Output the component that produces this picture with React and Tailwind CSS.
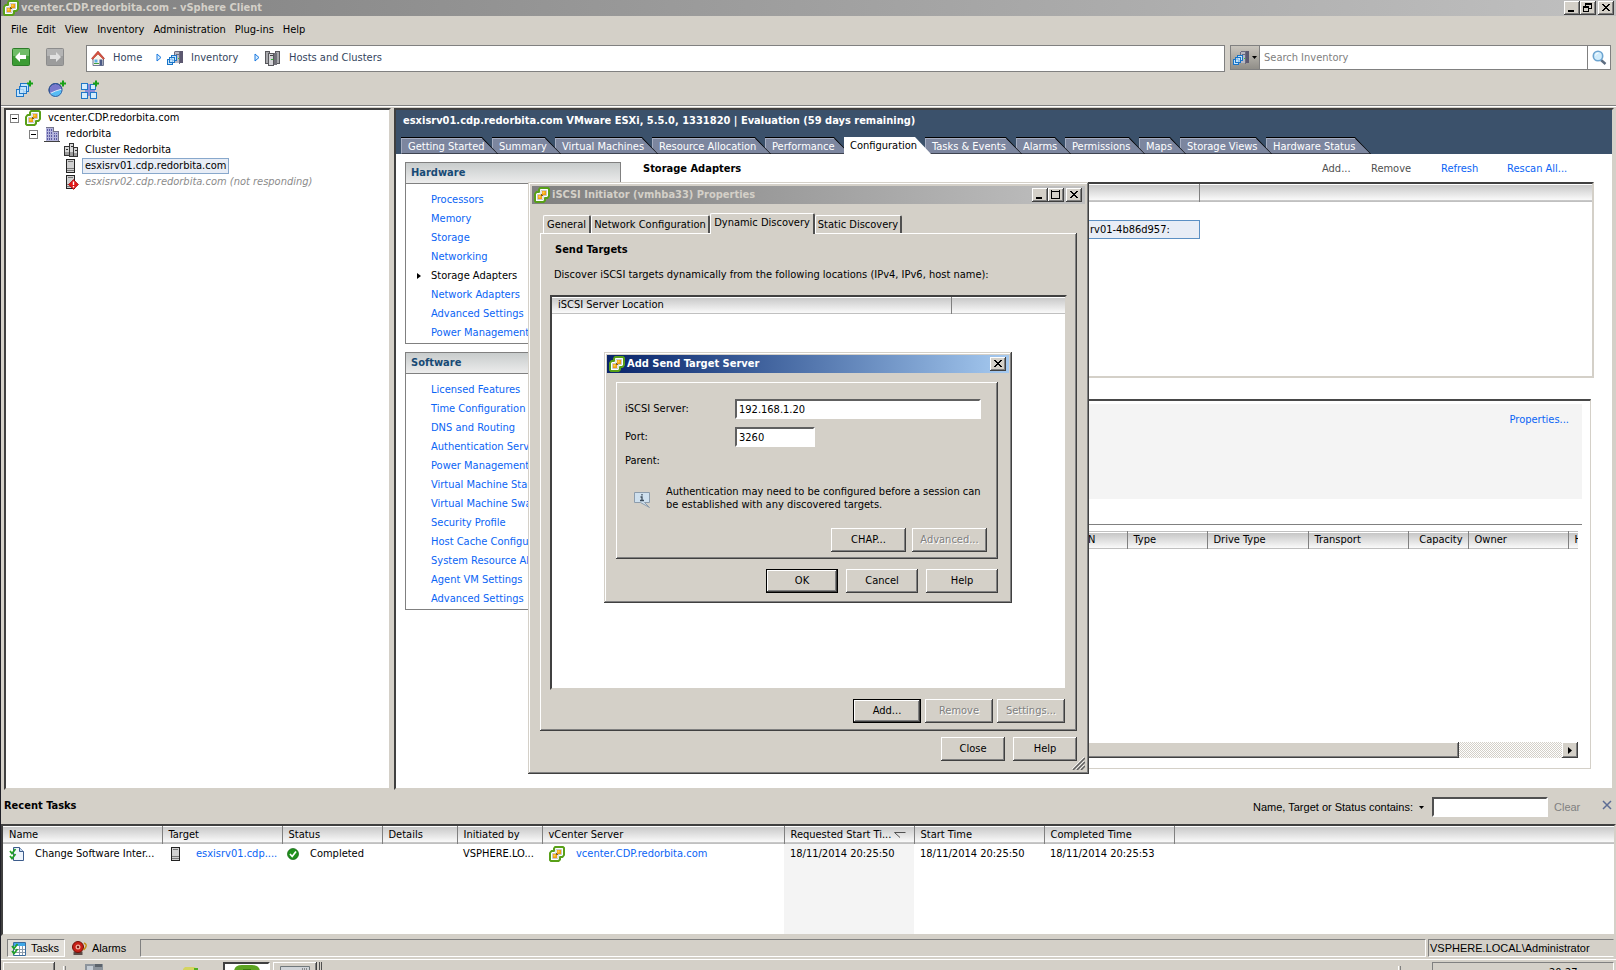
import React, { useState } from "react";

const MENU = ["File", "Edit", "View", "Inventory", "Administration", "Plug-ins", "Help"];

const HOST_TABS = [
  { label: "Getting Started", w: "w-[97px]" },
  { label: "Summary", w: "w-[69px]" },
  { label: "Virtual Machines", w: "w-[103px]" },
  { label: "Resource Allocation", w: "w-[119px]" },
  { label: "Performance", w: "w-[85px]" },
  { label: "Configuration", w: "w-[87px]" },
  { label: "Tasks & Events", w: "w-[97px]" },
  { label: "Alarms", w: "w-[55px]" },
  { label: "Permissions", w: "w-[80px]" },
  { label: "Maps", w: "w-[47px]" },
  { label: "Storage Views", w: "w-[92px]" },
  { label: "Hardware Status", w: "w-[105px]" },
];

const HARDWARE = [
  "Processors", "Memory", "Storage", "Networking", "Storage Adapters",
  "Network Adapters", "Advanced Settings", "Power Management",
];

const SOFTWARE = [
  "Licensed Features", "Time Configuration", "DNS and Routing", "Authentication Services",
  "Power Management", "Virtual Machine Startup", "Virtual Machine Swapfile", "Security Profile",
  "Host Cache Configuration", "System Resource Allocation", "Agent VM Settings", "Advanced Settings",
];

const DIALOG_TABS = [
  { label: "General", w: "w-[48px]" },
  { label: "Network Configuration", w: "w-[119px]" },
  { label: "Dynamic Discovery", w: "w-[105px]" },
  { label: "Static Discovery", w: "w-[87px]" },
];

const PATHS_COLS = [
  { label: "Type", w: "w-[80px]" },
  { label: "Drive Type", w: "w-[101px]" },
  { label: "Transport", w: "w-[100px]" },
  { label: "Capacity", w: "w-[60px]", right: true },
  { label: "Owner", w: "w-[100px]" },
  { label: "H", w: "w-[10px]" },
];

const TASK_COLS = [
  { label: "Name", w: "w-[159px]" },
  { label: "Target", w: "w-[120px]" },
  { label: "Status", w: "w-[100px]" },
  { label: "Details", w: "w-[75px]" },
  { label: "Initiated by", w: "w-[85px]" },
  { label: "vCenter Server", w: "w-[242px]" },
  { label: "Requested Start Ti...", w: "w-[130px]", sorted: true },
  { label: "Start Time", w: "w-[130px]" },
  { label: "Completed Time", w: "w-[130px]" },
  { label: "", w: "" },
];

// Classic Windows bevels
const RAISED = "shadow-[inset_-1px_-1px_#404040,inset_1px_1px_#ffffff,inset_-2px_-2px_#808080]";
const DEFAULT_BTN = "border border-black shadow-[inset_-1px_-1px_#404040,inset_1px_1px_#ffffff,inset_-2px_-2px_#808080]";
const WINDOW = "shadow-[inset_-1px_-1px_#404040,inset_1px_1px_#d4d0c8,inset_-2px_-2px_#808080,inset_2px_2px_#ffffff]";
const SUNKEN = "border-2 border-t-[#404040] border-l-[#404040] border-r-[#d4d0c8] border-b-[#d4d0c8] outline-0";
const HEAD = "bg-linear-to-b from-[#c6c6c6] to-[#fafafa] border-b border-[#c0c0c0] shadow-[inset_0_1px_#ffffff]";

/* ---------- icons ---------- */

const VSphereIcon = () => (
  <svg width="16" height="16" viewBox="0 0 16 16" className="shrink-0">
    <path d="M6 1h8l1 1v7l-1.500 2H11v2.500L9.500 15H2l-1-1V7l1.500-2H5V2.500z" fill="#fff" stroke="#58a018" strokeWidth="2" strokeLinejoin="round" />
    <path d="M7 7V3.500h5.500V8.500H9v4H3.500V7.500H7" fill="none" stroke="#c8c8c8" />
    <path d="M8 4h4v4H8zM4 8h4v4H4z" fill="#f0a010" />
    <path d="M8.500 4.500h2v2h-2zM4.500 8.500h2v2h-2z" fill="#ffd050" />
    <path d="M7 7h1v2H7zM8 8h1v1H8z" fill="#806018" />
  </svg>
);

const DatacenterIcon = () => (
  <svg width="16" height="16" viewBox="0 0 16 16" shapeRendering="crispEdges" className="shrink-0">
    <path d="M2 1h7v14h-7zM9 5h5v10h-5z" fill="#b4b4dc" />
    <path d="M2 1h7v4h5v10" fill="none" stroke="#74748c" />
    <path d="M3 3h1v2h-1zM5 3h1v2h-1zM7 3h1v2h-1zM3 6h1v2h-1zM5 6h1v2h-1zM7 6h1v2h-1zM3 9h1v2h-1zM5 9h1v2h-1zM7 9h1v2h-1zM3 12h1v2h-1zM5 12h1v2h-1zM7 12h1v2h-1zM10 7h1v1h-1zM12 7h1v1h-1zM10 9h1v2h-1zM12 9h1v2h-1zM10 12h1v2h-1zM12 12h1v2h-1z" fill="#5c5ca4" />
    <path d="M0 15h16v1h-16z" fill="#404040" />
  </svg>
);

const ClusterIcon = () => (
  <svg width="16" height="16" viewBox="0 0 16 16" shapeRendering="crispEdges" className="shrink-0">
    <g fill="#d8d8d8" stroke="#333">
      <path d="M1.500 4.500h5v9h-5zM10.500 5.500h4v9h-4zM6.500 1.500h4v13h-4z" />
    </g>
    <path d="M2 10h4v3h-4zM7 10h3v4h-3zM11 11h3v3h-3z" fill="#9c9c9c" />
    <path d="M3 7h2M7.500 4.500h2M11.500 8.500h2" stroke="#333" />
  </svg>
);

const HostIcon = ({ alert = false }) => (
  <svg width="16" height="16" viewBox="0 0 16 16" className="shrink-0">
    <g shapeRendering="crispEdges">
      <rect x="3.500" y="1.500" width="8" height="13" fill="#d0d0d0" stroke="#222" />
      <path d="M5 3.500h5M4 10.500h7M4 12.500h7" stroke="#777" />
    </g>
    {alert && (
      <>
        <path d="M10.500 5.500l5 5-5 5-5-5z" fill="#e01818" stroke="#900" strokeWidth=".6" />
        <path d="M10.500 7.500v3.500M10.500 12v1.500" stroke="#fff" strokeWidth="1.400" />
      </>
    )}
  </svg>
);

const InventoryIcon = () => (
  <svg width="16" height="16" viewBox="0 0 16 16" shapeRendering="crispEdges" className="shrink-0">
    <path d="M7 1h6v12h-6z" fill="#b8b8c4" />
    <path d="M13 1h3v12h-3z" fill="#5c5870" />
    <path d="M7.500 1.500h5v12M7.500 1.500v4M9 4.500h3" fill="none" stroke="#6c6c80" />
    <path d="M11 8h1v1h-1z" fill="#30d030" />
    <g fill="#c4e4fc" stroke="#1874c8">
      <rect x="4.500" y="5.500" width="5" height="5" />
      <rect x=".5" y="9.500" width="5" height="5" />
      <rect x="2.500" y="7.500" width="5" height="5" fillOpacity=".7" />
    </g>
  </svg>
);

const HostsIcon = () => (
  <svg width="16" height="16" viewBox="0 0 16 16" shapeRendering="crispEdges" className="shrink-0">
    <path d="M.5 1.500h4v12h-4zM10.500 1.500h4v12h-4z" fill="#a8a8ac" stroke="#58585c" />
    <path d="M3.500 3.500h5v12h-5z" fill="#d4d4d8" stroke="#58585c" />
    <path d="M9 3h3v12h-3z" fill="#707078" />
    <path d="M5 5h3v1h-3z" fill="#444" />
    <path d="M6 9h2v1h-2z" fill="#30c030" />
  </svg>
);

const HomeIcon = () => (
  <svg width="14" height="16" viewBox="0 0 14 16" className="shrink-0">
    <path d="M2 8v7.500h10.500V8L7 2.500z" fill="#f8f4ec" stroke="#707890" />
    <path d="M.5 8.500L7 1l6.500 7.500-1 1L7 4 1.500 9.500z" fill="#d85040" stroke="#a03020" strokeWidth=".5" />
    <path d="M3.500 9.500h3v3h-3z" fill="#58b0e8" />
    <path d="M8.500 9.500h3v6h-3z" fill="#4c5c88" />
    <path d="M3 13.500h5" stroke="#40a040" />
  </svg>
);

const Plus = () => <path d="M12 3.500h6M15 .5v6" stroke="#18a018" strokeWidth="2" />;

const NewVmIcon = () => (
  <svg width="19" height="20" viewBox="0 0 19 20" className="shrink-0">
    <g fill="#c4e4fc" stroke="#2078c8" shapeRendering="crispEdges">
      <rect x="5.500" y="3.500" width="8" height="8" />
      <rect x="1.500" y="9.500" width="7" height="7" />
      <rect x="4.500" y="6.500" width="7" height="7" fillOpacity=".8" />
    </g>
    <Plus />
  </svg>
);

const PoolIcon = () => (
  <svg width="19" height="20" viewBox="0 0 19 20" className="shrink-0">
    <circle cx="7.500" cy="10" r="6.500" fill="#7878cc" stroke="#38387c" />
    <path d="M7.500 11L14 9a6.500 6.500 0 0 1-12 4.500z" fill="#58bcf4" stroke="#fff" strokeWidth=".8" />
    <circle cx="7.500" cy="10" r="6.500" fill="none" stroke="#2c5c9c" />
    <Plus />
  </svg>
);

const VAppIcon = () => (
  <svg width="20" height="20" viewBox="0 0 20 20" className="shrink-0">
    <path d="M4 7h10v6H4zM6 4h6v12H6z" fill="#8c8cd8" />
    <g fill="#d4ecfc" stroke="#2078c8" shapeRendering="crispEdges">
      <rect x=".5" y="3.500" width="6" height="6" />
      <rect x=".5" y="12.500" width="6" height="6" />
      <rect x="9.500" y="12.500" width="6" height="6" />
      <rect x="9.500" y="4.500" width="5" height="5" />
    </g>
    <Plus />
  </svg>
);

const ArrowIcon = ({ back = false }) => (
  <svg width="18" height="18" viewBox="0 0 18 18" className="shrink-0">
    <rect x=".5" y=".5" width="17" height="17" rx="1" fill={back ? "#3c9c34" : "#9c9c9c"} stroke={back ? "#2c7c28" : "#8c8c8c"} />
    <path d="M1 1h16v7H1z" fill={back ? "#70bc68" : "#b4b4b4"} />
    <path d={back ? "M3 9l5-5v3h6v4H8v3z" : "M15 9l-5-5v3H4v4h6v3z"} fill={back ? "#fff" : "#e0e0e0"} />
  </svg>
);

const Chevron = () => (
  <svg width="6" height="9" viewBox="0 0 6 9" className="shrink-0">
    <path d="M1 1l4 3.500L1 8z" fill="#d8ecfc" stroke="#1878e0" />
  </svg>
);

const SearchIcon = () => (
  <svg width="15" height="16" viewBox="0 0 15 16" className="shrink-0">
    <path d="M9 10l4.500 4" stroke="#5c6c80" strokeWidth="2.500" />
    <circle cx="6" cy="6" r="4.700" fill="#d0ecfc" stroke="#6ca4d0" strokeWidth="1.600" />
    <path d="M3.500 5.500a3 3 0 0 1 3-2.500" stroke="#fff" fill="none" />
  </svg>
);

const InfoIcon = () => (
  <svg width="16" height="16" viewBox="0 0 16 16" className="shrink-0">
    <path d="M.5.500h15v10h-5l5 5-9-5h-6z" fill="#cfe0ee" stroke="#8c9cac" />
    <path d="M8 2v1.500M6.500 5H8v3.500M6 8.500h4" stroke="#3c4c5c" fill="none" strokeWidth="1.300" />
  </svg>
);

const TaskIcon = () => (
  <svg width="16" height="16" viewBox="0 0 16 16" className="shrink-0">
    <path d="M4.500 1.500h6l4 4v9h-10z" fill="#eef4fc" stroke="#3c5c8c" />
    <path d="M10.500 1.500v4h4" fill="#c4d8f0" stroke="#3c5c8c" />
    <path d="M1 5l2 2.500L6.500 3M1 10l2 2.500L6.500 8" fill="none" stroke="#20a028" strokeWidth="1.800" />
  </svg>
);

const DoneIcon = () => (
  <svg width="12" height="12" viewBox="0 0 12 12" className="shrink-0">
    <circle cx="6" cy="6" r="5.500" fill="#20901c" stroke="#106010" strokeWidth=".7" />
    <path d="M3 6l2.200 2.500L9 3.500" fill="none" stroke="#fff" strokeWidth="1.700" />
  </svg>
);

const TasksPaneIcon = () => (
  <svg width="15" height="15" viewBox="0 0 15 15" className="shrink-0">
    <path d="M2.500 1.500h12v13h-12z" fill="#fff" stroke="#3c6c9c" />
    <path d="M3 2h11v3H3z" fill="#40a8e8" />
    <path d="M3 8.500h11M3 11.500h11M8.500 5v9M11.500 5v9" stroke="#8c9cac" />
    <path d="M1 5l2 2.500L6.500 3M1 10l2 2.500L6.500 8" fill="none" stroke="#20a028" strokeWidth="1.800" />
  </svg>
);

const AlarmIcon = () => (
  <svg width="16" height="15" viewBox="0 0 16 15" className="shrink-0">
    <path d="M1.500 10.500h9v3.500h-9z" fill="#5c4c48" />
    <circle cx="6" cy="6" r="5.500" fill="#c82018" stroke="#701008" />
    <circle cx="6" cy="6" r="2.500" fill="#f0b0a0" />
    <circle cx="6" cy="6" r="1.200" fill="#801810" />
    <path d="M12 2c2 1 3 2 1.500 4.500L11.500 9" stroke="#c89018" strokeWidth="1.500" fill="none" />
  </svg>
);

const Glyph = ({ kind }) => (
  <svg width="10" height="9" viewBox="0 0 10 9" shapeRendering="crispEdges">
    {kind === "min" && <path d="M1 7h6v2H1z" />}
    {kind === "max" && <path d="M.5 0v8.500h8V0M0 1h9" fill="none" stroke="#000" />}
    {kind === "restore" && <path d="M2.500 3V.5h6v5H6M2 1.500h7M.5 3.500h5v5h-5zM0 4.500h6" fill="none" stroke="#000" />}
    {kind === "close" && <path d="M1 1l7 7M2 1l7 7M8 1l-7 7M9 1l-7 7" stroke="#000" fill="none" />}
  </svg>
);

/* ---------- small parts ---------- */

const CaptionButton = ({ kind, label, className = "" }) => (
  <button aria-label={label} className={`flex h-[14px] w-4 items-center justify-center bg-[#d4d0c8] pb-px ${RAISED} ${className}`}>
    <Glyph kind={kind} />
  </button>
);

const Button = ({ children, className = "", primary = false, disabled = false }) => (
  <button
    disabled={disabled}
    className={`h-6 bg-[#d4d0c8] disabled:text-[#808080] disabled:[text-shadow:1px_1px_#fff] ${primary ? DEFAULT_BTN : RAISED} ${className}`}
  >
    {children}
  </button>
);

const Expander = () => (
  <svg width="9" height="9" viewBox="0 0 9 9" shapeRendering="crispEdges" className="shrink-0">
    <rect x=".5" y=".5" width="8" height="8" fill="#fff" stroke="#808080" />
    <path d="M2 4.500h5" stroke="#000" />
  </svg>
);

const HostTab = ({ label, w, active, depth, onClick }) => (
  <button
    onClick={onClick}
    style={{ zIndex: active ? 20 : depth }}
    className={`relative -mr-1.5 h-[17px] shrink-0 text-left whitespace-nowrap [clip-path:polygon(0_0,calc(100%-16px)_0,100%_100%,0_100%)] ${w} ${active ? "bg-white text-black" : "bg-black text-white"}`}
  >
    <span
      className={`block pl-1.5 [clip-path:polygon(0_0,calc(100%-17px)_0,calc(100%-1px)_100%,0_100%)] ${active ? "h-[17px] leading-[17px]" : "h-4 border-t border-l border-[#a4acc0] bg-[#7c869f] leading-[15px]"}`}
    >
      {label}
    </span>
  </button>
);

const LinkBox = ({ title, items, current }) => (
  <section className="w-[216px] border border-[#808080] bg-white">
    <h2 className="h-[21px] border-b border-[#808080] bg-linear-to-b from-[#c8cccc] to-[#ececec] pl-[5px] leading-5 font-bold text-[#174a75]">{title}</h2>
    <ul className="pt-[6px] pb-px">
      {items.map((item) => (
        <li key={item} className="flex h-[19px] items-center whitespace-nowrap">
          <span className="flex w-[25px] justify-center">
            {item === current && <svg width="4" height="6" viewBox="0 0 4 6"><path d="M0 0l4 3-4 3z" /></svg>}
          </span>
          <a href="#" className={item === current ? "text-black" : "text-[#0a64f5]"}>{item}</a>
        </li>
      ))}
    </ul>
  </section>
);

/* ---------- dialogs ---------- */

function AddTargetDialog() {
  const [server, setServer] = useState("192.168.1.20");
  const [port, setPort] = useState("3260");
  const field = `bg-white pl-[2px] border-2 border-t-[#606060] border-l-[#606060] border-r-white border-b-white outline-none`;

  return (
    <div role="dialog" aria-label="Add Send Target Server" className={`absolute top-[352px] left-[603px] z-40 flex h-[251px] w-[408px] flex-col bg-[#d4d0c8] p-[3px] ${WINDOW}`}>
      <div className="flex h-[18px] shrink-0 items-center bg-linear-to-r from-[#0a246a] to-[#a6caf0] pr-[3px] pl-[2px]">
        <VSphereIcon />
        <h2 className="ml-[2px] flex-1 font-bold text-white">Add Send Target Server</h2>
        <CaptionButton kind="close" label="Close" />
      </div>

      <div className="mt-[9px] mr-[11px] ml-[9px] flex h-[177px] flex-col pl-[9px] pr-[11px] shadow-[inset_-1px_-1px_#404040,inset_1px_1px_#ffffff,inset_-2px_-2px_#808080]">
        <div className="mt-[17px] flex items-center">
          <label htmlFor="server" className="w-[110px]">iSCSI Server:</label>
          <input id="server" value={server} onChange={(e) => setServer(e.target.value)} className={`h-5 w-[246px] ${field}`} />
        </div>
        <div className="mt-[8px] flex items-center">
          <label htmlFor="port" className="w-[110px]">Port:</label>
          <input id="port" value={port} onChange={(e) => setPort(e.target.value)} className={`h-5 w-[80px] ${field}`} />
        </div>
        <p className="mt-[6px]">Parent:</p>
        <div className="mt-4 flex items-start gap-4 pl-[9px]">
          <span className="mt-[7px]"><InfoIcon /></span>
          <p className="w-[320px] leading-[13px]">
            Authentication may need to be configured before a session can be established with any discovered targets.
          </p>
        </div>
        <div className="mt-auto mb-[7px] flex justify-end gap-[6px]">
          <Button className="w-[75px]">CHAP...</Button>
          <Button className="w-[75px]" disabled>Advanced...</Button>
        </div>
      </div>

      <div className="mt-[10px] mr-[11px] flex justify-end gap-2">
        <Button className="w-[72px]" primary>OK</Button>
        <Button className="w-[72px]">Cancel</Button>
        <Button className="w-[72px]">Help</Button>
      </div>
    </div>
  );
}

function InitiatorDialog() {
  const [tab, setTab] = useState("Dynamic Discovery");

  return (
    <div role="dialog" aria-label="iSCSI Initiator Properties" className={`absolute top-[182px] left-[527px] z-30 flex h-[592px] w-[561px] flex-col bg-[#d4d0c8] p-1 ${WINDOW}`}>
      <div className="flex h-[18px] shrink-0 items-center bg-linear-to-r from-[#808080] to-[#c0c0c0] pr-[3px] pl-[2px]">
        <VSphereIcon />
        <h2 className="ml-[2px] flex-1 font-bold text-[#d4d0c8]">iSCSI Initiator (vmhba33) Properties</h2>
        <CaptionButton kind="min" label="Minimize" />
        <CaptionButton kind="max" label="Maximize" />
        <CaptionButton kind="close" label="Close" className="ml-[2px]" />
      </div>

      <div className="mx-2 mt-[9px] flex flex-1 flex-col">
        <div className="z-10 flex items-end pl-[3px]">
          {DIALOG_TABS.map((t) => (
            <button
              key={t.label}
              onClick={() => setTab(t.label)}
              className={`rounded-t-xs border-t border-r-2 border-l border-t-white border-r-[#505050] border-l-white text-center whitespace-nowrap ${t.w} ${t.label === tab ? "-mb-px h-[21px] bg-[#d4d0c8] pb-[2px]" : "h-[18px]"}`}
            >
              {t.label}
            </button>
          ))}
        </div>
        <div className={`flex flex-1 flex-col px-[10px] pb-2 ${RAISED}`}>
          <h3 className="mt-[9px] ml-[5px] font-bold">Send Targets</h3>
          <p className="mt-[9px] ml-[4px]">Discover iSCSI targets dynamically from the following locations (IPv4, IPv6, host name):</p>
          <div className={`mt-[12px] flex-1 bg-white ${SUNKEN}`}>
            <table className="w-full table-fixed">
              <thead>
                <tr className={`h-4 ${HEAD}`}>
                  <th className="border-r border-[#808080] pl-[6px] text-left font-normal">iSCSI Server Location</th>
                  <th className="w-[114px]" />
                </tr>
              </thead>
            </table>
          </div>
          <div className="mt-[9px] mr-[2px] flex justify-end gap-1">
            <Button className="w-[68px]" primary>Add...</Button>
            <Button className="w-[68px]" disabled>Remove</Button>
            <Button className="w-[68px]" disabled>Settings...</Button>
          </div>
        </div>
      </div>

      <div className="mt-[6px] mr-2 mb-[9px] flex justify-end gap-2">
        <Button className="w-16">Close</Button>
        <Button className="w-16">Help</Button>
      </div>
      <svg width="13" height="13" viewBox="0 0 13 13" className="absolute right-1 bottom-1">
        <path d="M1 13L13 1M5 13l8-8M9 13l4-4" stroke="#606060" strokeWidth="1.500" />
        <path d="M0 12L12 0M4 12l8-8M8 12l4-4" stroke="#fff" strokeWidth=".7" />
      </svg>
    </div>
  );
}

/* ---------- page ---------- */

export default function App() {
  const [tab, setTab] = useState("Configuration");
  const [search, setSearch] = useState("");
  const [filter, setFilter] = useState("");

  return (
    <div className="relative flex h-screen flex-col overflow-hidden border-l border-[#202028] bg-[#d4d0c8] font-['DejaVu_Sans_Condensed','DejaVu_Sans',sans-serif] text-[11px] leading-4 text-black">
      {/* Title bar */}
      <header className="flex h-4 shrink-0 items-center bg-linear-to-r from-[#808080] to-[#c0c0c0] pr-[2px] pl-[2px]">
        <VSphereIcon />
        <h1 className="ml-[2px] flex-1 leading-[14px] font-bold text-[#d4d0c8]">vcenter.CDP.redorbita.com - vSphere Client</h1>
        <CaptionButton kind="min" label="Minimize" />
        <CaptionButton kind="restore" label="Restore" />
        <CaptionButton kind="close" label="Close" className="ml-[2px]" />
      </header>

      <nav className="flex h-[26px] shrink-0 items-center gap-[9px] pt-[2px] pl-[10px]">
        {MENU.map((m) => <button key={m}>{m}</button>)}
      </nav>

      {/* Navigation bar */}
      <div className="flex h-[30px] shrink-0 items-start pt-[3px] pr-[5px] pl-[11px]">
        <button aria-label="Back" className="mt-[3px]"><ArrowIcon back /></button>
        <button aria-label="Forward" className="mt-[3px] ml-4"><ArrowIcon /></button>
        <div className="ml-[22px] flex h-[27px] flex-1 items-center border border-[#808080] bg-white pb-[2px] pl-1 text-[#34455e]">
          <HomeIcon />
          <a href="#" className="ml-2 w-[43px]">Home</a>
          <Chevron />
          <span className="ml-[5px]"><InventoryIcon /></span>
          <a href="#" className="ml-2 w-[63px]">Inventory</a>
          <Chevron />
          <span className="ml-[5px]"><HostsIcon /></span>
          <a href="#" className="ml-2">Hosts and Clusters</a>
        </div>
        <div className="ml-[5px] flex h-[25px] w-[381px] border border-[#808080] bg-white">
          <button aria-label="Search scope" className="flex w-[29px] items-center justify-center gap-[3px] border-r border-[#808080] bg-linear-to-b from-[#cac6be] to-[#908e88]">
            <InventoryIcon />
            <svg width="5" height="3" viewBox="0 0 5 3"><path d="M0 0h5l-2.500 3z" /></svg>
          </button>
          <input aria-label="Search Inventory" placeholder="Search Inventory" value={search} onChange={(e) => setSearch(e.target.value)} className="flex-1 pl-[4px] placeholder-[#808080] outline-none" />
          <button aria-label="Search" className="flex w-[23px] items-center justify-center border-l border-[#808080]"><SearchIcon /></button>
        </div>
      </div>

      <div className="flex h-[33px] shrink-0 items-center gap-[14px] pt-[3px] pl-[14px]">
        <button aria-label="New virtual machine"><NewVmIcon /></button>
        <button aria-label="New resource pool"><PoolIcon /></button>
        <button aria-label="New vApp"><VAppIcon /></button>
      </div>
      <div className="mb-px h-[2px] shrink-0 border-t border-b border-t-[#808080] border-b-white" />

      <main className="flex min-h-0 flex-1 gap-[3px] pr-[2px] pl-[3px]">
        {/* Inventory tree */}
        <aside className={`w-[387px] shrink-0 bg-white ${SUNKEN}`}>
          <ul>
            <li className="flex h-4 items-center pl-[4px]"><Expander /><span className="mr-[7px] ml-[6px]"><VSphereIcon /></span>vcenter.CDP.redorbita.com</li>
            <li className="flex h-4 items-center pl-[23px]"><Expander /><span className="mr-[6px] ml-[6px]"><DatacenterIcon /></span>redorbita</li>
            <li className="flex h-4 items-center gap-[6px] pl-[57px]"><ClusterIcon />Cluster Redorbita</li>
            <li className="flex h-4 items-center gap-[3px] pl-[57px]"><HostIcon /><span className="border border-[#88a8cc] bg-[#e8edf6] px-[2px] leading-[14px]">esxisrv01.cdp.redorbita.com</span></li>
            <li className="flex h-4 items-center gap-[6px] pl-[57px] text-[#8c8c8c] italic"><HostIcon alert />esxisrv02.cdp.redorbita.com (not responding)</li>
          </ul>
        </aside>

        {/* Host view */}
        <section className={`flex min-w-0 flex-1 flex-col bg-white ${SUNKEN}`}>
          <div className="shrink-0 bg-[#3b516b] pl-[5px]">
            <h2 className="h-[27px] pl-[2px] leading-[22px] font-bold text-white">esxisrv01.cdp.redorbita.com VMware ESXi, 5.5.0, 1331820 | Evaluation (59 days remaining)</h2>
            <div className="flex">
              {HOST_TABS.map((t, i) => (
                <HostTab key={t.label} label={t.label} w={t.w} active={t.label === tab} depth={12 - i} onClick={() => setTab(t.label)} />
              ))}
            </div>
          </div>

          <div className="flex min-h-0 flex-1">
            <div className="flex shrink-0 flex-col gap-2 pt-[8px] pl-[9px]">
              <LinkBox title="Hardware" items={HARDWARE} current="Storage Adapters" />
              <LinkBox title="Software" items={SOFTWARE} />
            </div>

            <div className="flex min-w-0 flex-1 flex-col pr-[18px] pb-[19px] pl-[15px]">
              <div className="flex h-7 shrink-0 items-center pt-[2px] pr-[26px] pl-[7px]">
                <h3 className="flex-1 font-bold">Storage Adapters</h3>
                <a href="#" className="w-[49px] text-[#505050]">Add...</a>
                <a href="#" className="w-[70px] text-[#505050]">Remove</a>
                <a href="#" className="w-[66px] text-[#0a64f5]">Refresh</a>
                <a href="#" className="w-[61px] whitespace-nowrap text-[#0a64f5]">Rescan All...</a>
              </div>

              <div className={`h-[196px] shrink-0 ${SUNKEN}`}>
                <table className="w-full table-fixed">
                  <thead>
                    <tr className={`h-[17px] ${HEAD}`}>
                      <th className="w-[451px]" />
                      <th className="w-[110px] border-r border-[#808080]" />
                      <th />
                    </tr>
                  </thead>
                  <tbody>
                    <tr className="h-[19px]"><td /></tr>
                    <tr className="h-[18px]">
                      <td className="border-y border-[#5c90c4] bg-[#e8edf6]" />
                      <td className="border-y border-r border-[#5c90c4] bg-[#e8edf6] pl-[1px] leading-[15px]">rv01-4b86d957:</td>
                      <td />
                    </tr>
                  </tbody>
                </table>
              </div>

              <div className="mt-[21px] mr-[3px] flex min-h-0 flex-1 flex-col border-t-2 border-r border-b border-t-[#484848] border-r-[#d4d0c8] border-b-[#d4d0c8]">
                <div className="mx-2 mt-[3px] h-[95px] shrink-0 bg-[#f4f4f4] pt-[8px] pr-[13px] text-right">
                  <a href="#" className="text-[#0a64f5]">Properties...</a>
                </div>
                <hr className="mx-2 mt-[25px] border-[#808080]" />
                <div className="mx-3 mt-[6px]">
                  <table className="w-full table-fixed">
                    <thead>
                      <tr className={`h-4 border-t ${HEAD}`}>
                        <th />
                        <th className="w-[60px] border-r border-[#808080] pr-[31px] text-right font-normal">LUN</th>
                        {PATHS_COLS.map((c) => (
                          <th key={c.label} className={`overflow-hidden border-r border-[#808080] font-normal last:border-r-0 ${c.w} ${c.right ? "pr-[5px] text-right" : "pl-[6px] text-left"}`}>{c.label}</th>
                        ))}
                      </tr>
                    </thead>
                  </table>
                </div>
                <div className="mx-3 mt-auto mb-[10px] flex h-4 shrink-0">
                  <div className={`flex-1 bg-[#d4d0c8] ${RAISED}`} />
                  <div className="w-[103px] bg-[repeating-conic-gradient(#d4d0c8_0_25%,#ffffff_0_50%)] bg-[length:2px_2px]" />
                  <button aria-label="Scroll right" className={`flex w-4 items-center justify-center bg-[#d4d0c8] ${RAISED}`}>
                    <svg width="4" height="7" viewBox="0 0 4 7"><path d="M0 0l4 3.500L0 7z" /></svg>
                  </button>
                </div>
              </div>
            </div>
          </div>
        </section>
      </main>

      {/* Recent tasks */}
      <div className="flex h-[34px] shrink-0 items-center pr-[4px] pl-[3px]">
        <h2 className="flex-1 pb-[2px] font-bold">Recent Tasks</h2>
        <label htmlFor="filter" className="font-['Liberation_Sans',sans-serif]">Name, Target or Status contains:</label>
        <svg width="5" height="3" viewBox="0 0 5 3" className="mr-[8px] ml-[6px]"><path d="M0 0h5l-2.500 3z" /></svg>
        <input id="filter" value={filter} onChange={(e) => setFilter(e.target.value)} className="h-5 w-[116px] border-2 border-t-[#505050] border-r-white border-b-white border-l-[#505050] bg-white outline-none" />
        <button className="ml-[6px] w-[48px] text-left font-['Liberation_Sans',sans-serif] text-[#808080]">Clear</button>
        <button aria-label="Close panel" className="mb-1">
          <svg width="10" height="10" viewBox="0 0 10 10"><path d="M1 1l8 8M9 1L1 9" stroke="#5c6c94" strokeWidth="1.500" /></svg>
        </button>
      </div>

      <div className={`h-[112px] shrink-0 bg-white ${SUNKEN}`}>
        <table className="h-full w-full table-fixed">
          <thead>
            <tr className={`h-[17px] ${HEAD}`}>
              {TASK_COLS.map((c) => (
                <th key={c.label} className={`border-r border-[#808080] pt-px pl-[6px] text-left leading-[15px] font-normal whitespace-nowrap last:border-r-0 ${c.w}`}>
                  {c.label}
                  {c.sorted && <svg width="12" height="6" viewBox="0 0 12 6" className="ml-[3px] inline"><path d="M11.500.500H.500L6 5.500" fill="none" stroke="#505050" /></svg>}
                </th>
              ))}
            </tr>
          </thead>
          <tbody className="align-top whitespace-nowrap">
            <tr className="h-[22px]">
              <td className="pt-[2px] pl-[6px]"><span className="flex items-center gap-[10px]"><TaskIcon />Change Software Inter...</span></td>
              <td className="pt-[2px] pl-[6px]"><span className="flex items-center gap-[12px]"><HostIcon /><a href="#" className="text-[#0a64f5]">esxisrv01.cdp....</a></span></td>
              <td className="pt-[2px] pl-[5px]"><span className="flex items-center gap-[11px]"><DoneIcon />Completed</span></td>
              <td />
              <td className="pt-[2px] pl-[6px]">VSPHERE.LO...</td>
              <td className="pt-[2px] pl-[7px]"><span className="flex items-center gap-[11px]"><VSphereIcon /><a href="#" className="text-[#0a64f5]">vcenter.CDP.redorbita.com</a></span></td>
              <td className="bg-[#f4f4f4] pt-[2px] pl-[6px]">18/11/2014 20:25:50</td>
              <td className="pt-[2px] pl-[6px]">18/11/2014 20:25:50</td>
              <td className="pt-[2px] pl-[6px]">18/11/2014 20:25:53</td>
              <td />
            </tr>
            <tr>
              <td colSpan={6} />
              <td className="bg-[#f4f4f4]" />
              <td colSpan={3} />
            </tr>
          </tbody>
        </table>
      </div>

      {/* Status bar */}
      <footer className="flex h-[23px] shrink-0 items-center pt-px pr-[2px] pl-[6px] font-['Liberation_Sans',sans-serif]">
        <button className="flex h-[18px] w-[58px] items-center gap-[5px] border border-t-[#808080] border-r-white border-b-white border-l-[#808080] bg-[#e2dfd9] pl-[3px]"><TasksPaneIcon />Tasks</button>
        <button className="ml-[7px] flex w-[60px] items-center gap-1"><AlarmIcon />Alarms</button>
        <div className="ml-[8px] h-[18px] flex-1 border border-t-[#808080] border-r-white border-b-white border-l-[#808080]" />
        <div className="ml-[2px] h-[18px] w-[186px] border border-t-[#808080] border-b-white border-l-[#808080] border-r-transparent pl-px">VSPHERE.LOCAL\Administrator</div>
      </footer>

      {/* Windows taskbar, its lower part runs off the screen */}
      <div className="flex h-[11px] shrink-0 items-start overflow-hidden border-t border-white pt-[2px] pr-[2px] pl-[2px]">
        <div className={`h-7 w-[52px] ${RAISED}`} />
        <div className="mt-1 ml-2 h-6 w-[3px] border-x border-l-white border-r-[#808080]" />
        <svg width="18" height="16" viewBox="0 0 18 16" className="mt-[2px] ml-[19px]"><path d="M0 0h18v16H0z" fill="#8c949c" /><path d="M2 2h6v14H2z" fill="#c4ccd4" /><path d="M10 0h7v3h-7z" fill="#5c646c" /></svg>
        <svg width="15" height="12" viewBox="0 0 15 12" className="mt-[5px] ml-[80px]"><path d="M0 2l2-2h9l4 2v10H0z" fill="#d4d460" /><path d="M11 1h4v3h-4z" fill="#50b020" /></svg>
        <div className="ml-[25px] flex h-7 w-[47px] justify-center border-2 border-t-[#404040] border-r-white border-b-white border-l-[#404040] bg-white">
          <svg width="26" height="20" viewBox="0 0 26 20"><path d="M0 8q0-7 8-7h10q8 0 8 7v12H0z" fill="#5ca420" /><path d="M9 5h8v4H9z" fill="#3c7c10" /></svg>
        </div>
        <div className={`ml-[3px] flex h-7 w-[44px] justify-center pt-1 ${RAISED}`}>
          <svg width="30" height="20" viewBox="0 0 30 20"><path d="M.5.500h29v19H.500z" fill="#d0d4d8" stroke="#70787c" /><path d="M22 3h6" stroke="#404040" strokeDasharray="1 1" /></svg>
        </div>
        <div className="ml-[2px] h-7 w-[3px] border-x border-[#505050]" />
        <div className="flex-1" />
        <div className="mt-1 mr-[31px] h-6 w-[3px] border-x border-l-white border-r-[#808080]" />
        <div className="h-7 w-[182px] border border-t-[#808080] border-l-[#808080] border-r-white pt-[2px] pl-[116px] leading-4">20:27</div>
      </div>

      <InitiatorDialog />
      <AddTargetDialog />
    </div>
  );
}
